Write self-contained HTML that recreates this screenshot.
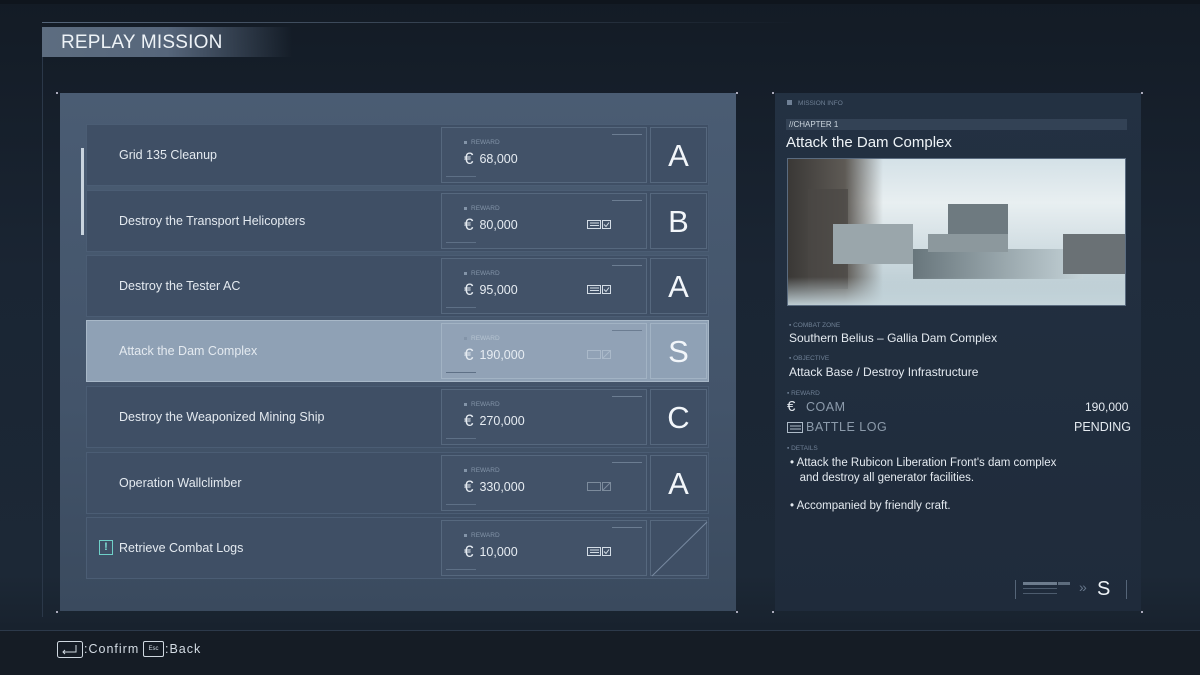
<!DOCTYPE html>
<html><head><meta charset="utf-8"><style>
*{margin:0;padding:0;box-sizing:border-box}
body{width:1200px;height:675px;overflow:hidden;background:linear-gradient(180deg,#131b25 0%,#1a2533 40%,#1c2836 85%,#151d27 100%);font-family:"Liberation Sans",sans-serif;color:#e6edf3;position:relative}
.abs{position:absolute}
.title{left:42px;top:27px;width:250px;height:30px;background:linear-gradient(90deg,#5d6d80 0%,#56667b 50%,rgba(60,75,95,0) 100%);}
.title span{position:absolute;left:19px;top:5px;font-size:19px;color:#eef3f7;letter-spacing:0.2px}
.lp{left:60px;top:93px;width:676px;height:518px;background:linear-gradient(180deg,#4a5c73 0%,#43546a 60%,#3a4a5e 100%)}
.rp{left:775px;top:93px;width:366px;height:518px;background:linear-gradient(180deg,#233142,#1f2b3b)}
.row{position:absolute;left:86px;width:623px;height:62px;background:#3f4f65;border:1px solid #4b5d74}
.row.sel{background:#8fa1b5;border-color:#a8b8c8}
.row .nm{position:absolute;left:32px;top:23px;font-size:12.5px;color:#e4eaf0}
.rw{position:absolute;left:354px;top:2px;width:206px;height:56px;border:1px solid #56687e;background:rgba(255,255,255,0.02)}
.sel .rw{border-color:#a2b3c4}
.rw .lb{position:absolute;left:22px;top:11px;font-size:6.5px;color:#8394a8}
.rw .lb:before{content:"";display:inline-block;width:3px;height:3px;background:#8394a8;margin-right:4px;vertical-align:middle}
.rw .v{position:absolute;left:22px;top:21px;font-size:12.5px;color:#e6ecf2}
.rw .v b{font-weight:normal;font-size:17px;margin-right:6px;vertical-align:-1px}
.rw .ic{position:absolute;left:145px;top:25px;width:26px;height:10px}
.rw .tl{position:absolute;right:4px;top:6px;width:30px;height:1px;background:#6c7d92}
.rw .bl{position:absolute;left:4px;bottom:5px;width:30px;height:1px;background:#5e7086}
.gr{position:absolute;left:563px;top:2px;width:57px;height:56px;border:1px solid #56687e;text-align:center;font-size:31px;line-height:56px;color:#f2f6fa}
.sel .gr{border-color:#a2b3c4}
.sm{font-size:6.5px;color:#6f8095}
</style></head><body>
<div class="abs" style="left:0;top:0;width:1200px;height:4px;background:#0f151d"></div>
<div class="abs" style="left:42px;top:22px;width:760px;height:1px;background:linear-gradient(90deg,#56667a,rgba(86,102,122,0))"></div>
<div class="abs" style="left:42px;top:57px;width:1px;height:560px;background:#2b3849"></div>
<div class="abs title"><span>REPLAY MISSION</span></div>
<div class="abs lp"></div>
<div class="abs" style="left:81px;top:148px;width:3px;height:87px;background:#c9d4de"></div>

<div class="row" style="top:124px"><div class="nm">Grid 135 Cleanup</div><div class="rw"><div class="tl"></div><div class="bl"></div><div class="lb">REWARD</div><div class="v"><b>€</b>68,000</div></div><div class="gr">A</div></div>
<div class="row" style="top:190px"><div class="nm">Destroy the Transport Helicopters</div><div class="rw"><div class="tl"></div><div class="bl"></div><div class="lb">REWARD</div><div class="v"><b>€</b>80,000</div><svg class="ic" viewBox="0 0 26 10"><rect x="0.5" y="1.5" width="13" height="8" fill="none" stroke="#d4dde6"/><line x1="3" y1="4" x2="12" y2="4" stroke="#d4dde6"/><line x1="3" y1="6.5" x2="12" y2="6.5" stroke="#d4dde6"/><rect x="15.5" y="1.5" width="8" height="8" fill="none" stroke="#d4dde6"/><path d="M17 5.5l2 2 3-4" fill="none" stroke="#d4dde6"/></svg></div><div class="gr">B</div></div>
<div class="row" style="top:255px"><div class="nm">Destroy the Tester AC</div><div class="rw"><div class="tl"></div><div class="bl"></div><div class="lb">REWARD</div><div class="v"><b>€</b>95,000</div><svg class="ic" viewBox="0 0 26 10"><rect x="0.5" y="1.5" width="13" height="8" fill="none" stroke="#d4dde6"/><line x1="3" y1="4" x2="12" y2="4" stroke="#d4dde6"/><line x1="3" y1="6.5" x2="12" y2="6.5" stroke="#d4dde6"/><rect x="15.5" y="1.5" width="8" height="8" fill="none" stroke="#d4dde6"/><path d="M17 5.5l2 2 3-4" fill="none" stroke="#d4dde6"/></svg></div><div class="gr">A</div></div>
<div class="row sel" style="top:320px"><div class="nm">Attack the Dam Complex</div><div class="rw"><div class="tl"></div><div class="bl"></div><div class="lb" style="color:#b5c3d0">REWARD</div><div class="v"><b>€</b>190,000</div><svg class="ic" viewBox="0 0 26 10" opacity="0.5"><rect x="0.5" y="1.5" width="13" height="8" fill="none" stroke="#c4d0dc"/><rect x="15.5" y="1.5" width="8" height="8" fill="none" stroke="#c4d0dc"/><path d="M16 9l7-7" stroke="#c4d0dc"/></svg></div><div class="gr">S</div></div>
<div class="row" style="top:386px"><div class="nm">Destroy the Weaponized Mining Ship</div><div class="rw"><div class="tl"></div><div class="bl"></div><div class="lb">REWARD</div><div class="v"><b>€</b>270,000</div></div><div class="gr">C</div></div>
<div class="row" style="top:452px"><div class="nm">Operation Wallclimber</div><div class="rw"><div class="tl"></div><div class="bl"></div><div class="lb">REWARD</div><div class="v"><b>€</b>330,000</div><svg class="ic" viewBox="0 0 26 10" opacity="0.45"><rect x="0.5" y="1.5" width="13" height="8" fill="none" stroke="#c4d0dc"/><rect x="15.5" y="1.5" width="8" height="8" fill="none" stroke="#c4d0dc"/><path d="M16 9l7-7" stroke="#c4d0dc"/></svg></div><div class="gr">A</div></div>
<div class="row" style="top:517px"><div style="position:absolute;left:12px;top:22px;width:14px;height:15px;border:1px solid #6fd0c8;color:#7fe0d6;font-size:11px;font-weight:bold;text-align:center;line-height:13px">!</div><div class="nm">Retrieve Combat Logs</div><div class="rw"><div class="tl"></div><div class="bl"></div><div class="lb">REWARD</div><div class="v"><b>€</b>10,000</div><svg class="ic" viewBox="0 0 26 10"><rect x="0.5" y="1.5" width="13" height="8" fill="none" stroke="#d4dde6"/><line x1="3" y1="4" x2="12" y2="4" stroke="#d4dde6"/><line x1="3" y1="6.5" x2="12" y2="6.5" stroke="#d4dde6"/><rect x="15.5" y="1.5" width="8" height="8" fill="none" stroke="#d4dde6"/><path d="M17 5.5l2 2 3-4" fill="none" stroke="#d4dde6"/></svg></div><div class="gr"><svg width="57" height="56" style="position:absolute;left:0;top:0"><line x1="1" y1="55" x2="56" y2="1" stroke="#7789a0"/></svg></div></div>

<div class="abs rp"></div>
<div class="abs sm" style="left:787px;top:100px"><span style="display:inline-block;width:5px;height:5px;background:#6f8095;margin-right:6px"></span>MISSION INFO</div>
<div class="abs" style="left:786px;top:119px;width:341px;height:11px;background:#334255;font-size:8px;color:#cdd7e0;padding-left:3px;line-height:11px">//CHAPTER 1</div>
<div class="abs" style="left:786px;top:134px;font-size:15px;color:#eef3f7">Attack the Dam Complex</div>
<div class="abs" style="left:787px;top:158px;width:339px;height:148px;border:1px solid #5b6c80;overflow:hidden;background:linear-gradient(180deg,#d4e1e7 0%,#e8eff1 30%,#d2dee3 60%,#b3c6cd 100%)">
 <div class="abs" style="left:0;top:0;width:95px;height:148px;background:linear-gradient(90deg,#3a3836,#5e5a55 60%,rgba(140,140,135,0))"></div>
 <div class="abs" style="left:20px;top:30px;width:40px;height:100px;background:#4a4744;opacity:.7"></div>
 <div class="abs" style="left:45px;top:65px;width:80px;height:40px;background:#9aa6ab"></div>
 <div class="abs" style="left:125px;top:90px;width:170px;height:30px;background:linear-gradient(90deg,#68767c,#c4d2d7)"></div>
 <div class="abs" style="left:160px;top:45px;width:60px;height:35px;background:#6e7a80"></div>
 <div class="abs" style="left:140px;top:75px;width:80px;height:18px;background:#8c989d"></div>
 <div class="abs" style="left:275px;top:75px;width:64px;height:40px;background:#6a7175"></div>
 <div class="abs" style="left:0;top:118px;width:339px;height:30px;background:linear-gradient(180deg,rgba(200,215,222,0),#c6d6dc)"></div>
</div>
<div class="abs sm" style="left:789px;top:322px">▪ COMBAT ZONE</div>
<div class="abs" style="left:789px;top:331px;font-size:12px;color:#e4eaf0">Southern Belius – Gallia Dam Complex</div>
<div class="abs sm" style="left:789px;top:355px">▪ OBJECTIVE</div>
<div class="abs" style="left:789px;top:365px;font-size:12px;color:#e4eaf0">Attack Base / Destroy Infrastructure</div>
<div class="abs sm" style="left:787px;top:390px">▪ REWARD</div>
<div class="abs" style="left:787px;top:398px;font-size:15px;color:#e4eaf0">€</div>
<div class="abs" style="left:806px;top:400px;font-size:12.5px;color:#8c9bab;letter-spacing:.5px">COAM</div>
<div class="abs" style="left:1085px;top:400px;font-size:12px;color:#e4eaf0">190,000</div>
<svg class="abs" style="left:787px;top:421px" width="16" height="12"><rect x="0.5" y="1.5" width="15" height="10" fill="none" stroke="#aebbc8"/><line x1="3" y1="5" x2="14" y2="5" stroke="#aebbc8"/><line x1="3" y1="8" x2="14" y2="8" stroke="#aebbc8"/></svg>
<div class="abs" style="left:806px;top:420px;font-size:12.5px;color:#8c9bab;letter-spacing:.5px">BATTLE LOG</div>
<div class="abs" style="left:1074px;top:420px;font-size:12.5px;color:#e4eaf0">PENDING</div>
<div class="abs sm" style="left:787px;top:445px">▪ DETAILS</div>
<div class="abs" style="left:790px;top:456px;font-size:11.5px;line-height:15px;color:#e4eaf0">• Attack the Rubicon Liberation Front's dam complex<br>&nbsp;&nbsp;&nbsp;and destroy all generator facilities.<br><div style="height:13px"></div>• Accompanied by friendly craft.</div>
<div class="abs" style="left:1015px;top:580px;width:112px;height:19px;border-left:1px solid #556578;border-right:1px solid #556578"></div>
<div class="abs" style="left:1023px;top:582px;width:34px;height:3px;background:#6d7c8d"></div>
<div class="abs" style="left:1058px;top:582px;width:12px;height:3px;background:#5d6c7d"></div>
<div class="abs" style="left:1023px;top:588px;width:34px;height:1px;background:#4d5c6e"></div>
<div class="abs" style="left:1023px;top:593px;width:34px;height:1px;background:#4d5c6e"></div>
<div class="abs" style="left:1079px;top:579px;font-size:14px;color:#66768a">»</div>
<div class="abs" style="left:1097px;top:578px;font-size:20px;color:#eef3f7">S</div>

<div class="abs" style="left:56px;top:92px;width:2px;height:2px;background:#aab"></div>
<div class="abs" style="left:736px;top:92px;width:2px;height:2px;background:#aab"></div>
<div class="abs" style="left:56px;top:611px;width:2px;height:2px;background:#aab"></div>
<div class="abs" style="left:736px;top:611px;width:2px;height:2px;background:#aab"></div>
<div class="abs" style="left:772px;top:92px;width:2px;height:2px;background:#aab"></div>
<div class="abs" style="left:1141px;top:92px;width:2px;height:2px;background:#aab"></div>
<div class="abs" style="left:772px;top:611px;width:2px;height:2px;background:#aab"></div>
<div class="abs" style="left:1141px;top:611px;width:2px;height:2px;background:#aab"></div>

<div class="abs" style="left:0;top:630px;width:1200px;height:1px;background:#2c394a"></div>
<div class="abs" style="left:0;top:631px;width:1200px;height:44px;background:#151c25"></div>
<svg class="abs" style="left:57px;top:641px" width="26" height="17"><rect x="0.5" y="0.5" width="25" height="16" rx="2" fill="none" stroke="#cfd8e0"/><path d="M19 4v7H6M8 9l-2 2 2 2" fill="none" stroke="#cfd8e0"/></svg>
<div class="abs" style="left:84px;top:642px;font-size:12.5px;color:#d4dce4;letter-spacing:1px">:Confirm</div>
<div class="abs" style="left:143px;top:641px;width:21px;height:16px;border:1px solid #cfd8e0;border-radius:2px;font-size:6px;text-align:center;line-height:14px;color:#d4dce4">Esc</div>
<div class="abs" style="left:165px;top:642px;font-size:12.5px;color:#d4dce4;letter-spacing:1px">:Back</div>
</body></html>
